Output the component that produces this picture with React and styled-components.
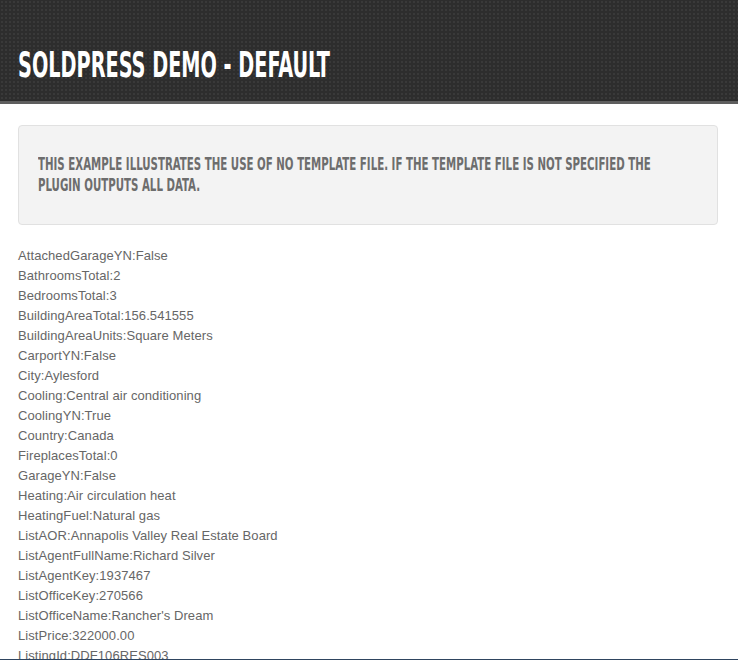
import React from "react";
import styled, { createGlobalStyle } from "styled-components";

const Global = createGlobalStyle`
  html, body { margin: 0; padding: 0; background: #fff; }
  body { font-family: "Liberation Sans", Arial, sans-serif; }
`;

const Header = styled.header`
  height: 101px;
  background-color: #2d2d2d;
  background-image: radial-gradient(circle, #393939 0.9px, transparent 1.1px);
  background-size: 4px 4px;
  border-bottom: 3px solid #5e5e5e;
  padding: 0 18px;
  display: flex;
  align-items: flex-start;
  overflow: hidden;
`;

const Title = styled.h1`
  margin: 0;
  margin-top: 45px;
  font-family: "DejaVu Sans Condensed", "DejaVu Sans", sans-serif;
  font-weight: bold;
  font-size: 35px;
  line-height: 40px;
  color: #fff;
  white-space: nowrap;
  text-transform: uppercase;
  transform: scaleX(${(p) => p.$sx});
  transform-origin: left center;
`;

const Main = styled.main`
  padding: 21px 20px 0 18px;
`;

const Notice = styled.div`
  background: #f3f3f3;
  border: 1px solid #e1e1e1;
  border-radius: 4px;
  padding: 28px 19px 28px;
  margin-bottom: 21px;
  overflow: hidden;
`;

const NoticeText = styled.p`
  margin: 0;
  font-family: "DejaVu Sans Condensed", "DejaVu Sans", sans-serif;
  font-weight: bold;
  font-size: 17px;
  line-height: 21px;
  color: #6d6d6d;
  text-transform: uppercase;
  width: ${(p) => p.$w / p.$sx}px;
  transform: scaleX(${(p) => p.$sx});
  transform-origin: left top;
`;

const List = styled.div`
  display: flex;
  flex-direction: column;
`;

const Row = styled.div`
  font-family: "Liberation Sans", Arial, sans-serif;
  font-size: 13px;
  line-height: 20px;
  letter-spacing: 0.08px;
  color: #666;
`;

const BottomLine = styled.div`
  position: fixed;
  left: 0;
  right: 0;
  bottom: 0;
  height: 1px;
  background: #2f4560;
`;

const data = [
  ["AttachedGarageYN", "False"],
  ["BathroomsTotal", "2"],
  ["BedroomsTotal", "3"],
  ["BuildingAreaTotal", "156.541555"],
  ["BuildingAreaUnits", "Square Meters"],
  ["CarportYN", "False"],
  ["City", "Aylesford"],
  ["Cooling", "Central air conditioning"],
  ["CoolingYN", "True"],
  ["Country", "Canada"],
  ["FireplacesTotal", "0"],
  ["GarageYN", "False"],
  ["Heating", "Air circulation heat"],
  ["HeatingFuel", "Natural gas"],
  ["ListAOR", "Annapolis Valley Real Estate Board"],
  ["ListAgentFullName", "Richard Silver"],
  ["ListAgentKey", "1937467"],
  ["ListOfficeKey", "270566"],
  ["ListOfficeName", "Rancher's Dream"],
  ["ListPrice", "322000.00"],
  ["ListingId", "DDF106RES003"],
  ["ListingKey", "DDF106RES003"],
  ["LotSizeArea", "0"],
  ["PostalCode", "B0P1C0"],
];

export default function App() {
  return (
    <>
      <Global />
      <Header>
        <Title $sx={0.612}>SOLDPRESS DEMO - DEFAULT</Title>
      </Header>
      <Main>
        <Notice>
          <NoticeText $sx={0.669} $w={640}>
            This example illustrates the use of no template file. If the template file is not specified the plugin outputs all data.
          </NoticeText>
        </Notice>
        <List>
          {data.map(([k, v]) => (
            <Row key={k}>
              {k}:{v}
            </Row>
          ))}
        </List>
      </Main>
      <BottomLine />
    </>
  );
}
